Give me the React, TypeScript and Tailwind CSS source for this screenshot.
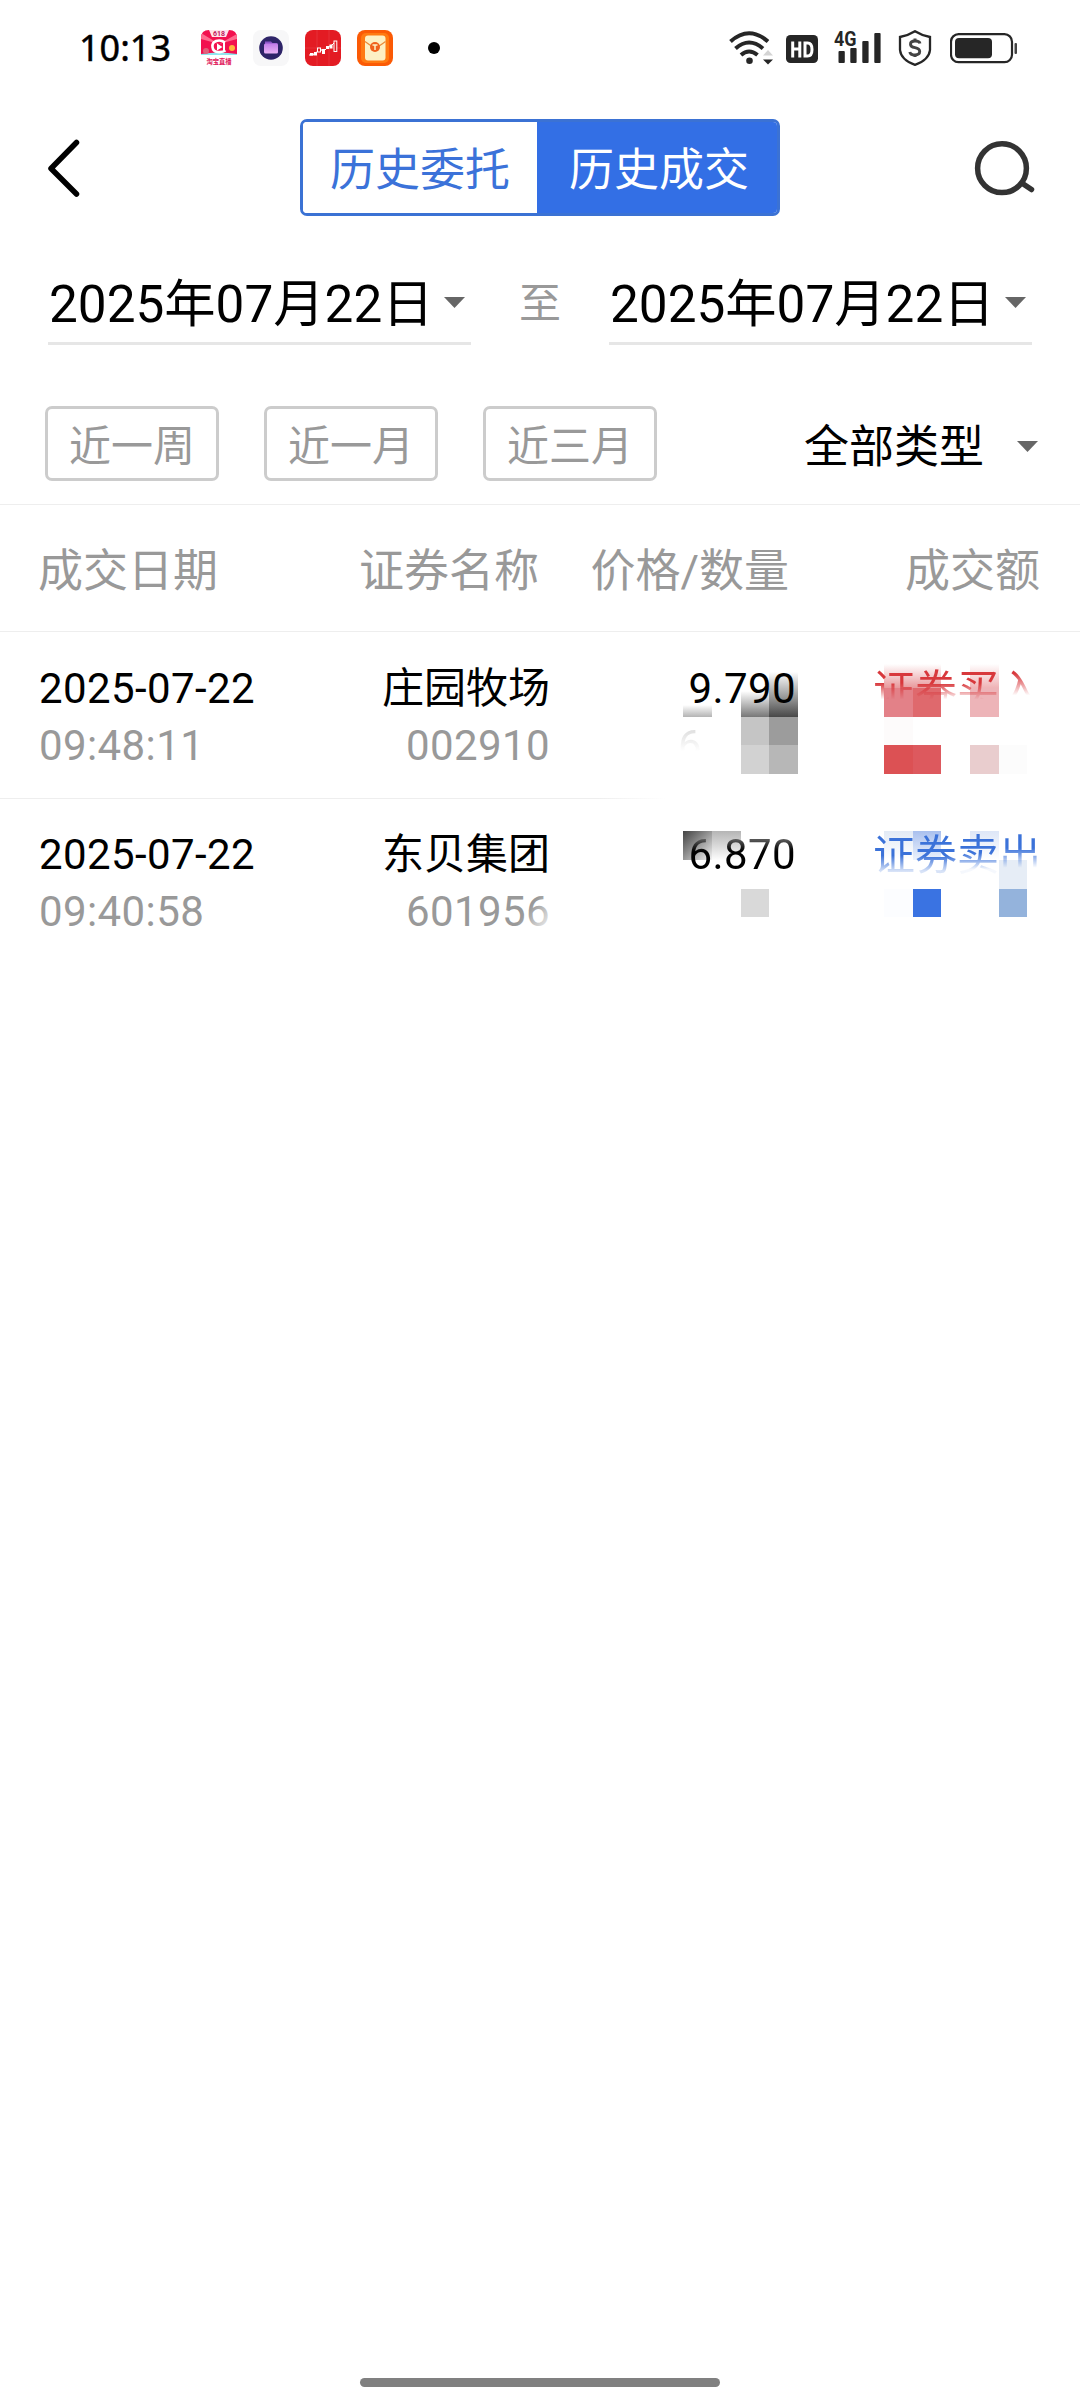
import React from "react";

function StatusBar() {
  return (
    <div className="flex h-24 items-center pl-[79px] pr-[62px] text-black">
      <span className="w-[94px] whitespace-nowrap font-['Noto_Sans',sans-serif] text-[36px] font-normal leading-[36px] [-webkit-text-stroke:0.5px_#000]">10:13</span>
      <div className="ml-[28px] flex items-center gap-4">
        <svg width="36" height="36" viewBox="0 0 36 36">
          <defs>
            <clipPath id="live"><path d="M8 0h20q8 0 8 8v17H0V8q0-8 8-8z" /></clipPath>
          </defs>
          <g clipPath="url(#live)">
            <rect width="36" height="25" fill="#f2114f" />
            <path d="M18 14 0 3v6zM18 14 36 4v5z" fill="#ff6a8e" />
            <path d="M8 0h20l-3 7H11z" fill="#ffe3ea" />
            <path d="M0 24q18-3 36 0v2H0z" fill="#8fe6ee" />
          </g>
          <text x="18" y="6" textAnchor="middle" fontSize="7" fontWeight="700" fill="#c2185b" fontFamily="Roboto">618</text>
          <path d="M24 12.5q-4-3-9-1.500q-4 1.500-3.500 6t5 5q5 .5 8-1.500" fill="none" stroke="#fff" strokeWidth="2.600" />
          <path d="M23 11v10" stroke="#fff" strokeWidth="2" />
          <path d="M16 13.500l5.500 3.500-5.500 3.500z" fill="#fff" />
          <circle cx="5" cy="21" r="3" fill="#e0607a" />
          <circle cx="31" cy="18" r="3" fill="#ffb43c" />
          <text x="18" y="33.500" textAnchor="middle" fontSize="6.300" fontWeight="700" fill="#e0145a" fontFamily="Noto Sans CJK SC">淘宝直播</text>
        </svg>
        <svg width="36" height="36" viewBox="0 0 36 36">
          <defs>
            <linearGradient id="folder" x1="0" y1="0" x2="0" y2="1"><stop offset="0" stopColor="#c07be8" /><stop offset="1" stopColor="#eab4f6" /></linearGradient>
          </defs>
          <rect width="36" height="36" rx="8" fill="#f7f7f8" />
          <circle cx="18" cy="18" r="11.800" fill="#2e2468" />
          <path d="M12 11.500h6l1.500 1.500h5v10H12z" fill="#8d56c8" />
          <rect x="11" y="13.500" width="14" height="10" rx="1.500" fill="url(#folder)" />
        </svg>
        <svg width="36" height="36" viewBox="0 0 36 36">
          <rect width="36" height="36" rx="8" fill="#e31b23" />
          <path d="M0 18h36M12 0v36M24 0v36" stroke="#ea4147" strokeWidth=".6" />
          <path d="M4 25h4l3-2 4-5 3 4 5-5 4-2 3-3" fill="none" stroke="#fff" strokeWidth="1" />
          <rect x="5" y="23" width="3.500" height="2.500" fill="#fff" />
          <rect x="9" y="22" width="3" height="3.500" fill="#fff" />
          <rect x="12.500" y="18" width="3" height="4" fill="#e31b23" stroke="#fff" />
          <rect x="17" y="19" width="3" height="5" fill="#fff" />
          <rect x="21" y="16" width="3" height="3" fill="#fff" />
          <rect x="24.500" y="14.500" width="3" height="4" fill="#fff" />
          <rect x="29" y="11" width="2.800" height="10.500" fill="#e31b23" stroke="#fff" />
        </svg>
        <svg width="36" height="36" viewBox="0 0 36 36">
          <rect width="36" height="36" rx="8" fill="#fb5a05" />
          <rect x="4" y="3" width="28" height="30" rx="5" fill="#ff7a12" />
          <rect x="8" y="5.500" width="20.500" height="25" rx="3" fill="#fdf0c4" />
          <path d="M8 11.500q4 3 6.500 4.500M28.500 11.500q-4 3-6.500 4.500" stroke="#e98b3a" strokeWidth="1.200" fill="none" />
          <circle cx="18" cy="17" r="5" fill="#f0601c" />
          <path d="M15.500 15h5M18 15v5" stroke="#fdf0c4" strokeWidth="1.500" />
        </svg>
      </div>
      <div className="ml-[35px] size-3 rounded-full bg-black" />
      <div className="ml-auto flex items-center">
        <svg width="45" height="36" viewBox="0 0 45 36" fill="none" stroke="#262626" strokeWidth="4">
          <path d="M1.500 11.500Q20 -5 39 11.500" />
          <path d="M6.500 18.500Q20 6.500 34 18.500" />
          <path d="M12 25Q20 18 28.500 25" />
          <circle cx="20.500" cy="30.800" r="3.300" fill="#262626" stroke="none" />
          <path d="M34 25.500 39 20l5 5.500z" fill="#d4d4d4" stroke="none" />
          <path d="M34 29.500h10l-5 5z" fill="#262626" stroke="none" />
        </svg>
        <svg className="ml-3" width="32" height="36" viewBox="0 0 32 36">
          <rect y="5" width="32" height="28" rx="4.500" fill="#262626" />
          <path d="M6.700 11.500v16M13.800 11.500v16M6.700 19h7" stroke="#fff" strokeWidth="3" />
          <path d="M19 13h2.500q4.500 0 4.500 6.500t-4.500 6.500H19z" fill="none" stroke="#fff" strokeWidth="3" />
        </svg>
        <svg className="ml-[16px]" width="48" height="52" viewBox="0 -8 48 52">
          <text x="0" y="16" fontFamily="Roboto" fontSize="20.500" fontWeight="700" fill="#262626" textLength="22.500" lengthAdjust="spacingAndGlyphs">4G</text>
          <g fill="#262626">
            <rect x="4.500" y="21" width="6.300" height="12" rx="1" />
            <rect x="16.300" y="18" width="6.300" height="15" rx="1" />
            <rect x="28.300" y="11" width="6.300" height="22" rx="1" />
            <rect x="40.300" y="3" width="6.300" height="30" rx="1" />
          </g>
        </svg>
        <svg className="ml-[16px]" width="34" height="36" viewBox="0 0 34 36" fill="none">
          <path d="M17 1.200Q24 5.500 32 7v13Q31 30 17 34.800 3 30 2 20V7Q10 5.500 17 1.200z" stroke="#262626" strokeWidth="2.300" />
          <path d="M22 13.500Q21.500 11 17 11t-4.500 3.200q0 2.600 4.500 3.500t4.700 3.600Q21.700 25 17 25t-5.200-3" stroke="#444" strokeWidth="2.900" />
          <path d="M17 8.500v3M17 24v3" stroke="#444" strokeWidth="3" />
        </svg>
        <svg className="ml-[18px]" width="68" height="36" viewBox="0 0 68 36">
          <rect x="1" y="4.200" width="61" height="28" rx="7.500" fill="none" stroke="#262626" strokeWidth="2.200" />
          <rect x="5" y="8" width="37" height="20.300" rx="4" fill="#262626" />
          <rect x="64.500" y="13" width="2.500" height="11" rx="1" fill="#444" />
        </svg>
      </div>
    </div>
  );
}

function Header() {
  return (
    <div className="flex h-[143px] items-center pl-[47px] pr-[44px]">
      <svg width="34" height="60" viewBox="0 0 34 60" fill="none" stroke="#000" strokeWidth="5.500" strokeLinecap="round" strokeLinejoin="round">
        <path d="M29.500 4.500 4 30.500l25.500 25.500" />
      </svg>
      <div className="ml-[219px] flex h-[97px] w-[480px] overflow-hidden rounded-[7px] border-[3px] border-[#3b72d4] text-[45px] leading-[98px]">
        <div className="w-[234px] bg-white text-center text-[#3b72d9]">历史委托</div>
        <div className="w-[240px] bg-[#336fe5] pl-[4px] text-center text-white">历史成交</div>
      </div>
      <svg className="ml-auto" width="62" height="60" viewBox="0 0 62 60" fill="none" stroke="#333" strokeWidth="5.500" strokeLinecap="round">
        <circle cx="28" cy="30.200" r="24.400" />
        <path d="M48.500 45.500 57.500 51.500" />
      </svg>
    </div>
  );
}

function Caret() {
  return (
    <svg className="mt-[6px]" width="21" height="11" viewBox="0 0 21 11"><path d="M0 0h21L10.500 11z" fill="#666" /></svg>
  );
}

function DateField() {
  return (
    <div className="flex h-[88px] w-[423px] items-center justify-between border-b-[3px] border-[#e6e6e6] pl-px pr-[6px]">
      <span className="whitespace-nowrap pt-[10px] text-[51.3px] leading-[75px]">2025年07月22日</span>
      <Caret />
    </div>
  );
}

function Filters() {
  return (
    <div className="mt-[61px] flex items-center pl-[45px] pr-[42px]">
      <div className="flex gap-[45px]">
        {["近一周", "近一月", "近三月"].map((t) => (
          <div key={t} className="h-[75px] w-[174px] rounded-[7px] border-[3px] border-[#ccc] text-center text-[42px] leading-[76px] text-[#999]">{t}</div>
        ))}
      </div>
      <span className="ml-auto mr-[33px] pt-[8px] text-[45px] leading-[67px]">全部类型</span>
      <Caret />
    </div>
  );
}

function RowText({ date, time, name, code, fade }: { date: string; time: string; name: string; code: string; fade?: boolean }) {
  return (
    <>
      <div className="w-[300px] pl-[39px]">
        <div className="tracking-[0.4px]">{date}</div>
        <div className="tracking-[0.4px] text-[#999]">{time}</div>
      </div>
      <div className="relative w-[250px] text-right">
        <div>{name}</div>
        <div className="tracking-[0.4px] text-[#999]">{code}</div>
        {fade && <div className="absolute right-0 top-[68px] h-[40px] w-[32px] bg-linear-to-br from-transparent from-35% to-white" />}
      </div>
    </>
  );
}

export default function App() {
  return (
    <div className="flex h-[2408px] w-[1080px] flex-col overflow-hidden bg-white font-['Roboto','Noto_Sans_CJK_SC',sans-serif] text-black">
      <StatusBar />
      <Header />
      <div className="mt-[18px] flex items-center justify-between pl-12 pr-12">
        <DateField />
        <span className="pt-[5px] text-[42px] leading-[79px] text-[#999]">至</span>
        <DateField />
      </div>
      <Filters />
      <div className="mt-[23px] flex h-[128px] items-center border-y border-[#eee] pt-[8px] text-[45px] leading-[60px] text-[#999]">
        <span className="w-[359px] pl-[38px]">成交日期</span>
        <span className="w-[180px]">证券名称</span>
        <span className="w-[250px] text-right">价格/数量</span>
        <span className="flex-1 pr-[40px] text-right">成交额</span>
      </div>

      <div className="flex h-[166px] pt-[28px] text-[42px] leading-[57px]">
        <RowText date="2025-07-22" time="09:48:11" name="庄园牧场" code="002910" />
        <div className="relative w-[246px] text-right">
          <div className="absolute left-[133px] top-[45px] h-[12px] w-[29px] bg-linear-to-b from-white to-[#b4b4b4]" />
          <div className="absolute left-[191px] top-[20px] h-[37px] w-[28px] bg-linear-to-b from-transparent from-30% to-[#777]" />
          <div className="absolute left-[219px] top-[4px] h-[53px] w-[29px] bg-linear-to-b from-transparent from-15% to-[#484848]" />
          <div className="relative tracking-[0.4px]">9.790</div>
          <div className="absolute left-[191px] top-[57px] grid grid-cols-[28px_29px] grid-rows-[28px_29px]">
            <div className="bg-[#c5c5c5]" /><div className="bg-[#9c9c9c]" />
            <div className="bg-[#d2d2d2]" /><div className="bg-[#b7b7b7]" />
          </div>
          <div className="absolute left-[128px] top-[57px] bg-linear-to-b from-[#ddd] from-20% to-transparent to-60% bg-clip-text text-transparent">6</div>
        </div>
        <div className="relative flex-1 pr-[39px] text-right">
          <div className="absolute left-[88px] top-[4px] h-[24px] w-[57px] bg-linear-to-b from-transparent to-[#e8989b]" />
          <div className="absolute left-[174px] top-[4px] h-[24px] w-[29px] bg-linear-to-b from-transparent to-[#efb3b6]" />
          <div className="absolute left-[88px] top-[28px] h-[29px] w-[29px] bg-[#e38188]" />
          <div className="absolute left-[117px] top-[28px] h-[29px] w-[28px] bg-[#df696d]" />
          <div className="absolute left-[174px] top-[28px] h-[29px] w-[29px] bg-[#edb4b8]" />
          <div className="relative top-[2px]">
            <span className="bg-linear-to-b from-[#d8383c] from-35% to-transparent to-68% bg-clip-text text-transparent">证券买</span>
            <span className="bg-linear-to-b from-[#d8383c] from-15% to-transparent to-60% bg-clip-text text-transparent">入</span>
          </div>
          <div className="absolute left-[88px] top-[57px] h-[28px] w-[29px] bg-[#fdfbfb]" />
          <div className="absolute left-[88px] top-[85px] grid h-[29px] grid-cols-[29px_28px_29px_29px_28px]">
            <div className="bg-[#dc5154]" /><div className="bg-[#dd595e]" /><div /><div className="bg-[#e9cdce]" /><div className="bg-[#fcfcfc]" />
          </div>
        </div>
      </div>
      <div className="h-px w-[665px] bg-linear-to-r from-[#eee] from-90% to-white" />
      <div className="flex h-[166px] pt-[27px] text-[42px] leading-[57px]">
        <RowText date="2025-07-22" time="09:40:58" name="东贝集团" code="601956" fade />
        <div className="relative w-[246px] text-right">
          <div className="absolute left-[133px] top-[5px] h-[29px] w-[29px] bg-linear-to-br from-[#444] to-[#f4f4f4]" />
          <div className="absolute left-[162px] top-[5px] h-[29px] w-[29px] bg-linear-to-b from-[#b5b5b5] to-[#fdfdfd]" />
          <div className="relative bg-linear-to-b from-[#555] from-25% to-black to-50% bg-clip-text tracking-[0.4px] text-transparent">6.870</div>
          <div className="absolute left-[191px] top-[63px] size-[28px] bg-[#d9d9d9]" />
        </div>
        <div className="relative flex-1 pr-[39px] text-right">
          <div className="absolute left-[88px] top-[5px] h-[29px] w-[29px] bg-linear-to-b from-[#e2eaf5] to-white" />
          <div className="absolute left-[117px] top-[5px] h-[29px] w-[28px] bg-linear-to-b from-[#a9c0ee] to-[#eef3fc]" />
          <div className="absolute left-[174px] top-[5px] h-[29px] w-[29px] bg-linear-to-b from-[#dde6f7] to-white" />
          <div className="absolute left-[203px] top-[34px] h-[29px] w-[28px] bg-[#e6edf6]" />
          <div className="relative top-px">
            <span className="bg-linear-to-b from-[#3b72d9] from-50% to-[#3b72d9]/20 to-82% bg-clip-text text-transparent">证券</span>
            <span className="bg-linear-to-b from-[#3b72d9] from-45% to-[#3b72d9]/5 to-78% bg-clip-text text-transparent">卖</span>
            <span className="bg-linear-to-b from-[#3b72d9] from-35% to-transparent to-75% bg-clip-text text-transparent">出</span>
          </div>
          <div className="absolute left-[88px] top-[63px] grid h-[28px] grid-cols-[29px_28px_58px_28px]">
            <div className="bg-[#fcfdff]" /><div className="bg-[#3a73e2]" /><div /><div className="bg-[#94b3dc]" />
          </div>
        </div>
      </div>
      <div className="mb-[21px] mt-auto h-[9px] w-[360px] self-center rounded-full bg-[#808080]" />
    </div>
  );
}
